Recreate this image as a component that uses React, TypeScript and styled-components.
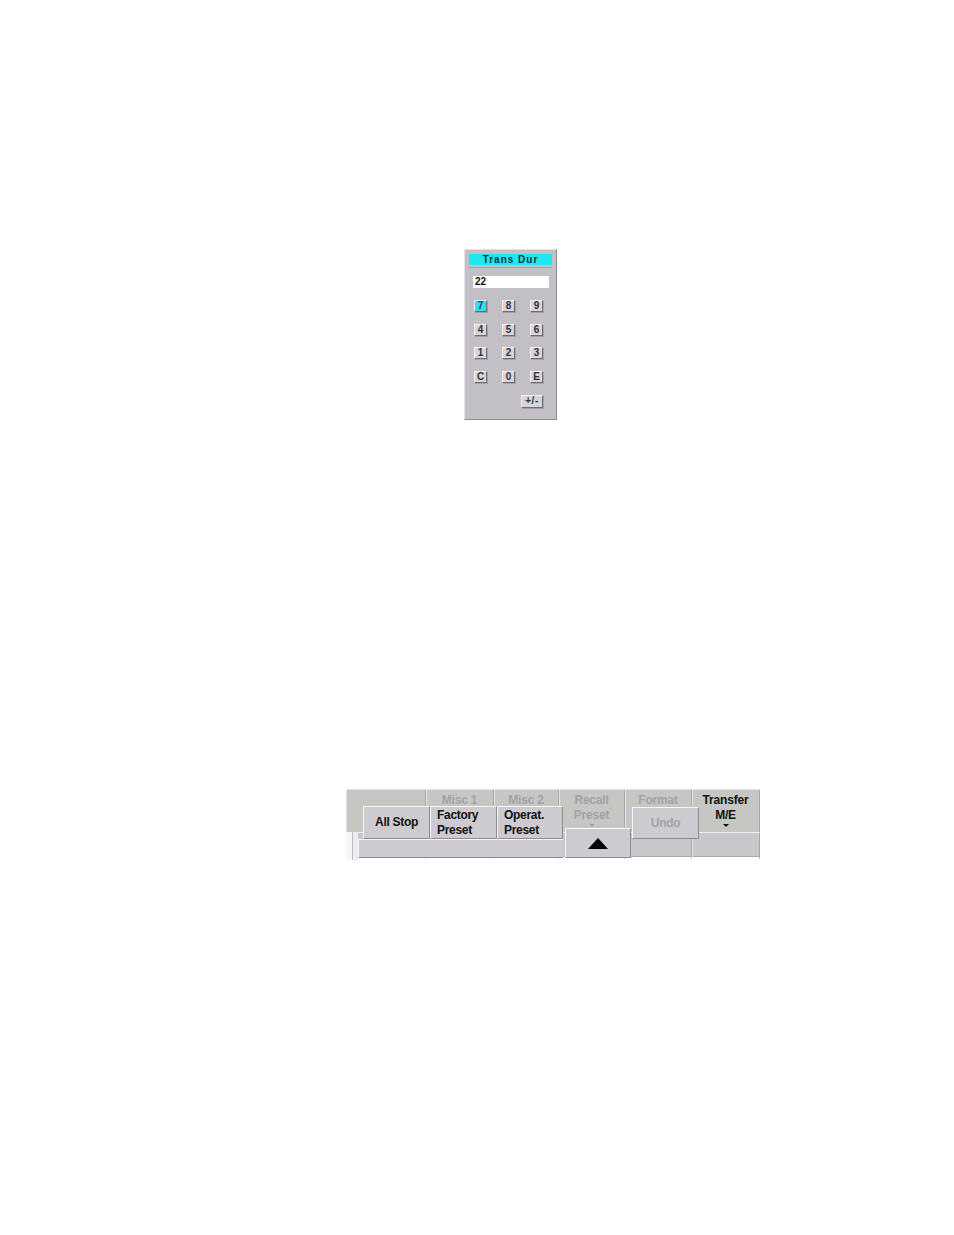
import React from "react";
import styled, { createGlobalStyle } from "styled-components";

const GlobalStyle = createGlobalStyle`
  html, body {
    margin: 0;
    padding: 0;
    background: #ffffff;
  }
  body {
    font-family: "Liberation Sans", Arial, sans-serif;
  }
`;

const Page = styled.div`
  width: 954px;
  height: 1235px;
  display: flex;
  flex-direction: column;
  align-items: flex-start;
  padding-top: 249px;
  box-sizing: border-box;
`;

/* ---------- keypad ---------- */

const Keypad = styled.div`
  margin-left: 464px;
  width: 93px;
  height: 171px;
  box-sizing: border-box;
  background: #c2bfc7;
  border: 1px solid #e4e2e7;
  border-right-color: #8e8b93;
  border-bottom-color: #8e8b93;
  padding: 4px 4px 0 4px;
  display: flex;
  flex-direction: column;
`;

const Title = styled.div`
  height: 11px;
  background: #22e6ee;
  color: #0c3442;
  font-size: 10px;
  font-weight: bold;
  letter-spacing: 1px;
  line-height: 11px;
  text-align: center;
  border-bottom: 2px solid #c2bfc7;
  box-shadow: 0 1px 0 #a4a1a9;
`;

const Field = styled.div`
  margin: 9px 3px 0 4px;
  height: 12px;
  background: #ffffff;
  font-size: 10px;
  font-weight: bold;
  line-height: 12px;
  padding-left: 2px;
  color: #111;
`;

const KeyGrid = styled.div`
  margin: 12px 0 0 5px;
  display: grid;
  grid-template-columns: 13px 13px 13px;
  grid-auto-rows: 12px;
  column-gap: 15px;
  row-gap: 11.5px;
`;

const Key = styled.div<{ $active?: boolean; $wide?: boolean }>`
  box-sizing: border-box;
  width: ${({ $wide }) => ($wide ? "22px" : "13px")};
  height: ${({ $wide }) => ($wide ? "13px" : "12px")};
  background: ${({ $active }) => ($active ? "#2fe0ea" : "#d7d4da")};
  border: 1px solid #f4f3f6;
  border-right-color: #6f6c74;
  border-bottom-color: #6f6c74;
  box-shadow: 1px 1px 0 #a5a2aa;
  color: ${({ $active }) => ($active ? "#1c3a6a" : "#333137")};
  font-size: 10px;
  font-weight: bold;
  line-height: 10px;
  text-align: center;
  letter-spacing: ${({ $wide }) => ($wide ? "0.5px" : "0")};
  grid-column: ${({ $wide }) => ($wide ? "2 / span 2" : "auto")};
  justify-self: ${({ $wide }) => ($wide ? "end" : "start")};
  margin-top: ${({ $wide }) => ($wide ? "0.5px" : "0")};
`;

/* ---------- menu bar ---------- */

const Bar = styled.div`
  position: relative;
  margin-top: 369px;
  margin-left: 346px;
  width: 414px;
  height: 71px;
  background: #c8c6ca;
  border-top: 1px solid #e2e1e3;
  box-sizing: border-box;
  display: grid;
  grid-template-columns: 80px 68px 65px 66px 67px 68px;
  grid-template-rows: 42px 28px;
`;

const Tab = styled.div<{ $strong?: boolean }>`
  border-right: 1px solid #a8a6ab;
  box-shadow: inset 1px 0 0 #e4e3e6;
  display: flex;
  flex-direction: column;
  align-items: center;
  padding-top: 3px;
  font-size: 12px;
  font-weight: bold;
  line-height: 15px;
  letter-spacing: -0.2px;
  color: ${({ $strong }) => ($strong ? "#111" : "#a4a1a8")};
  background: #c6c7c3;
`;

const LowCell = styled.div`
  border-right: 1px solid #a8a6ab;
  border-top: 1px solid #eeedf0;
  border-bottom: 3px solid #ffffff;
  box-shadow: inset 1px 0 0 #e4e3e6, inset 0 -1px 0 #a8a6ab;
  background: #c9c7cc;
`;

const Caret = styled.div<{ $strong?: boolean }>`
  width: 0;
  height: 0;
  margin-top: 1px;
  border-left: 3.5px solid transparent;
  border-right: 3.5px solid transparent;
  border-top: 3px solid ${({ $strong }) => ($strong ? "#111" : "#a4a1a8")};
`;

const Notch = styled.div`
  position: absolute;
  left: 0;
  top: 42px;
  width: 12px;
  height: 28px;
  background: #ecebee;
  border-left: 6px solid #f6f6f7;
  box-sizing: border-box;
  box-shadow: inset 1px 0 0 #bdbbc0;
`;

/* popup menu lying over the tab bar */
const Popup = styled.div`
  position: absolute;
  left: 12px;
  top: 16px;
  display: flex;
  align-items: flex-start;
`;

const LeftGroup = styled.div`
  display: flex;
  flex-direction: column;
  width: 205px;
`;

const ButtonRow = styled.div`
  display: flex;
  padding-left: 5px;
`;

const MenuButton = styled.div<{ $w: number; $h: number; $left?: boolean; $dim?: boolean }>`
  box-sizing: border-box;
  width: ${({ $w }) => $w}px;
  height: ${({ $h }) => $h}px;
  background: #cdcbd0;
  border: 1px solid #f6f5f7;
  border-right-color: #8d8a91;
  border-bottom-color: #8d8a91;
  display: flex;
  flex-direction: column;
  justify-content: center;
  align-items: ${({ $left }) => ($left ? "flex-start" : "center")};
  padding-left: ${({ $left }) => ($left ? "6px" : "0")};
  font-size: 12px;
  font-weight: bold;
  line-height: 15px;
  letter-spacing: -0.3px;
  color: ${({ $dim }) => ($dim ? "#a4a1a8" : "#111")};
`;

const Strip = styled.div`
  height: 19px;
  box-sizing: border-box;
  background: #cdcbd0;
  border-top: 1px solid #f6f5f7;
  border-bottom: 1px solid #8d8a91;
  border-left: 1px solid #f6f5f7;
`;

const ArrowButton = styled(MenuButton)`
  margin-top: 22px;
  margin-left: 2px;
  border-top-color: #ffffff;
`;

const UndoButton = styled(MenuButton)`
  margin-left: 1px;
  margin-top: 1px;
`;

const keys = ["7", "8", "9", "4", "5", "6", "1", "2", "3", "C", "0", "E"];

export default function App() {
  return (
    <>
      <GlobalStyle />
      <Page>
        <Keypad>
          <Title>Trans Dur</Title>
          <Field>22</Field>
          <KeyGrid>
            {keys.map((k) => (
              <Key key={k} $active={k === "7"}>
                {k}
              </Key>
            ))}
            <Key $wide>+/-</Key>
          </KeyGrid>
        </Keypad>

        <Bar>
          <Tab />
          <Tab>Misc 1</Tab>
          <Tab>Misc 2</Tab>
          <Tab>
            Recall
            <span>Preset</span>
            <Caret />
          </Tab>
          <Tab>Format</Tab>
          <Tab $strong>
            Transfer
            <span>M/E</span>
            <Caret $strong />
          </Tab>
          <LowCell />
          <LowCell />
          <LowCell />
          <LowCell />
          <LowCell />
          <LowCell />
          <Notch />

          <Popup>
            <LeftGroup>
              <ButtonRow>
                <MenuButton $w={67} $h={33}>All Stop</MenuButton>
                <MenuButton $w={67} $h={33} $left>
                  <span>Factory</span>
                  <span>Preset</span>
                </MenuButton>
                <MenuButton $w={66} $h={33} $left>
                  <span>Operat.</span>
                  <span>Preset</span>
                </MenuButton>
              </ButtonRow>
              <Strip />
            </LeftGroup>
            <ArrowButton $w={66} $h={30}>
              <svg width="20" height="11" viewBox="0 0 20 11">
                <polygon points="10,0 20,11 0,11" fill="#000" />
              </svg>
            </ArrowButton>
            <UndoButton $w={67} $h={32} $dim>Undo</UndoButton>
          </Popup>
        </Bar>
      </Page>
    </>
  );
}
